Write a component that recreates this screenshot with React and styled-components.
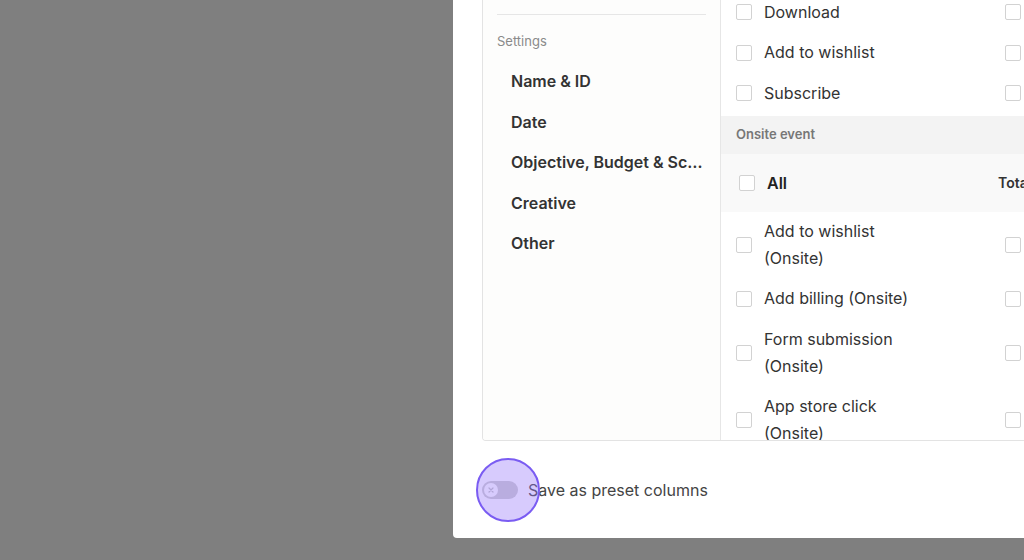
import React from "react";
import styled, { createGlobalStyle } from "styled-components";

const Global = createGlobalStyle`
  html, body { margin: 0; padding: 0; background: #7f7f7f; overflow: hidden; }
  body { font-family: Inter, "Noto Sans", Roboto, sans-serif; -webkit-font-smoothing: antialiased; }
  * { box-sizing: border-box; }
`;

const Page = styled.div`
  height: 560px;
  display: flex;
  align-items: flex-start;
  padding-left: 453px;
`;

const Modal = styled.div`
  width: 700px;
  flex: none;
  height: 538px;
  background: #fff;
  border-radius: 0 0 4px 4px;
  display: flex;
  flex-direction: column;
  justify-content: flex-end;
  padding: 0 29px;
  overflow: hidden;
`;

const Box = styled.div`
  height: 441px;
  flex: none;
  display: flex;
  border: 1px solid #e3e3e3;
  border-top: none;
  border-radius: 0 0 4px 4px;
  overflow: hidden;
`;

const Sidebar = styled.div`
  width: 238px;
  flex: none;
  background: #fdfdfc;
  border-right: 1px solid #e6e6e6;
  padding: 14px 14px 0 14px;
`;

const Divider = styled.div`
  height: 1px;
  background: #e6e6e6;
`;

const SectionLabel = styled.div`
  margin-top: 16px;
  line-height: 20px;
  font-size: 13px;
  color: #8a8a8a;
  margin-bottom: 10px;
`;

const NavItem = styled.div`
  height: 40.5px;
  line-height: 40.5px;
  padding-left: 14px;
  font-size: 16px;
  font-weight: 600;
  color: #333;
  white-space: nowrap;
  overflow: hidden;
  text-overflow: ellipsis;
`;

const Panel = styled.div`
  flex: 1;
  min-width: 0;
  overflow: hidden;
`;

const List = styled.div`
  margin-top: ${(p) => p.$offset || 0}px;
  margin-bottom: ${(p) => p.$after || 0}px;
`;

const Row = styled.div`
  display: flex;
  padding-left: 15px;
`;

const Cell = styled.div`
  width: 269px;
  flex: none;
  display: flex;
  align-items: center;
  gap: 12px;
  padding: 6.5px 0;
  min-height: 40.5px;
`;

const Box16 = styled.span`
  width: 16px;
  height: 16px;
  flex: none;
  border: 1px solid #d2d2d2;
  border-radius: 2px;
  background: #fff;
`;

const Label = styled.span`
  max-width: 165px;
  font-size: 16px;
  line-height: 27px;
  color: #333;
`;

const GroupHeader = styled.div`
  height: 38px;
  display: flex;
  align-items: center;
  padding-left: 15px;
  padding-bottom: 2px;
  background: #f3f3f3;
  font-size: 13px;
  font-weight: 600;
  color: #777;
`;

const AllRow = styled.div`
  height: 58px;
  display: flex;
  align-items: center;
  background: #f9f9f9;
  padding-left: 18px;
`;

const AllCell = styled.div`
  width: 259px;
  flex: none;
  display: flex;
  align-items: center;
  gap: 12px;
  font-size: 16px;
  font-weight: 600;
  color: #222;
`;

const HeadText = styled.span`
  font-size: 14px;
  font-weight: 600;
  color: #333;
  white-space: nowrap;
`;

const Footer = styled.div`
  height: 97px;
  flex: none;
  display: flex;
  align-items: center;
  gap: 10px;
`;

const ToggleWrap = styled.div`
  position: relative;
  width: 36px;
  height: 18px;
  flex: none;
`;

const Track = styled.div`
  width: 36px;
  height: 18px;
  border-radius: 9px;
  background: #cfcfcf;
  display: flex;
  align-items: center;
  padding-left: 2px;
`;

const Knob = styled.div`
  width: 14px;
  height: 14px;
  border-radius: 50%;
  background: #fff;
  display: flex;
  align-items: center;
  justify-content: center;
`;

const Spot = styled.div`
  position: absolute;
  left: -6px;
  top: -23px;
  width: 64px;
  height: 64px;
  border-radius: 50%;
  border: 2.5px solid #7a5cf2;
  background: rgba(150, 118, 250, 0.38);
  pointer-events: none;
`;

const FooterText = styled.span`
  font-size: 16px;
  color: #444;
`;

const top = ["Download", "Add to wishlist", "Subscribe"];

const onsite = [
  "Add to wishlist (Onsite)",
  "Add billing (Onsite)",
  "Form submission (Onsite)",
  "App store click (Onsite)",
];

const nav = ["Name & ID", "Date", "Objective, Budget & Schedule", "Creative", "Other"];

function CheckRow({ label }) {
  return (
    <Row>
      <Cell>
        <Box16 />
        <Label>{label}</Label>
      </Cell>
      <Cell>
        <Box16 />
      </Cell>
    </Row>
  );
}

export default function App() {
  return (
    <>
      <Global />
      <Page>
        <Modal>
          <Box>
            <Sidebar>
              <Divider />
              <SectionLabel>Settings</SectionLabel>
              {nav.map((n) => (
                <NavItem key={n}>{n}</NavItem>
              ))}
            </Sidebar>
            <Panel>
              <List $offset={-8} $after={2}>
                {top.map((t) => (
                  <CheckRow key={t} label={t} />
                ))}
              </List>
              <GroupHeader>Onsite event</GroupHeader>
              <AllRow>
                <AllCell>
                  <Box16 />
                  All
                </AllCell>
                <HeadText>Tota</HeadText>
              </AllRow>
              <List>
                {onsite.map((t) => (
                  <CheckRow key={t} label={t} />
                ))}
              </List>
            </Panel>
          </Box>
          <Footer>
            <ToggleWrap>
              <Track>
                <Knob>
                  <svg width="8" height="8" viewBox="0 0 8 8">
                    <path d="M2 2L6 6M6 2L2 6" stroke="#c4c4c4" strokeWidth="1.2" strokeLinecap="round" />
                  </svg>
                </Knob>
              </Track>
              <Spot />
            </ToggleWrap>
            <FooterText>Save as preset columns</FooterText>
          </Footer>
        </Modal>
      </Page>
    </>
  );
}
